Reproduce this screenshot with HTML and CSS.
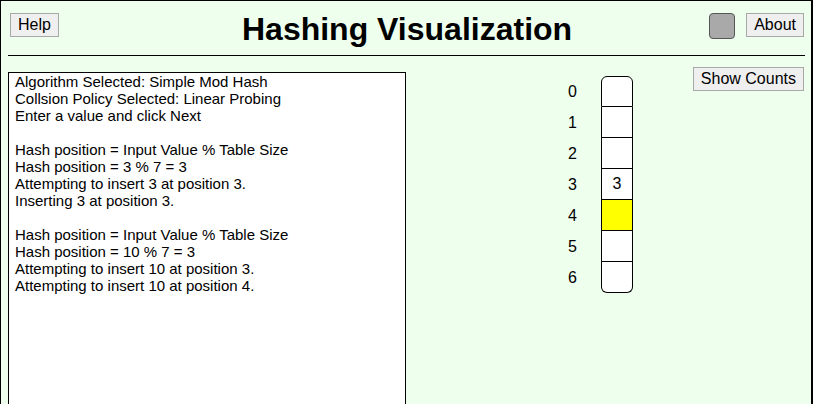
FILE: index.html
```html
<!DOCTYPE html>
<html>
<head>
<meta charset="utf-8">
<link rel="stylesheet" href="styles.css">
</head>
<body>
<div class="frame">
  <header class="top">
    <button class="btn help">Help</button>
    <h1 class="title">Hashing Visualization</h1>
    <div class="right-tools">
      <span class="swatch"></span>
      <button class="btn">About</button>
    </div>
  </header>
  <div class="rule"></div>
  <main class="main">
    <div class="log">
      <div class="lines">
        <div>Algorithm Selected: Simple Mod Hash</div>
        <div>Collsion Policy Selected: Linear Probing</div>
        <div>Enter a value and click Next</div>
        <div>&nbsp;</div>
        <div>Hash position = Input Value % Table Size</div>
        <div>Hash position = 3 % 7 = 3</div>
        <div>Attempting to insert 3 at position 3.</div>
        <div>Inserting 3 at position 3.</div>
        <div>&nbsp;</div>
        <div>Hash position = Input Value % Table Size</div>
        <div>Hash position = 10 % 7 = 3</div>
        <div>Attempting to insert 10 at position 3.</div>
        <div>Attempting to insert 10 at position 4.</div>
      </div>
    </div>
    <div class="table-area">
      <div class="hash">
        <div class="idx">0</div><div class="cell first"></div>
        <div class="idx">1</div><div class="cell"></div>
        <div class="idx">2</div><div class="cell"></div>
        <div class="idx">3</div><div class="cell">3</div>
        <div class="idx">4</div><div class="cell hl"></div>
        <div class="idx">5</div><div class="cell"></div>
        <div class="idx">6</div><div class="cell last"></div>
      </div>
    </div>
    <div class="side">
      <button class="btn counts">Show Counts</button>
    </div>
  </main>
</div>
</body>
</html>
```
FILE: styles.css
```css
* { box-sizing: border-box; }
html, body { margin: 0; padding: 0; }
body {
  font-family: "Liberation Sans", Arial, sans-serif;
  background: #eeffee;
  overflow: hidden;
}
.frame {
  width: 813px;
  height: 404px;
  overflow: hidden;
  border: 1px solid #000;
  border-right-width: 2px;
  border-bottom: none;
  background: #eeffee;
}
.top {
  display: flex;
  align-items: flex-start;
  justify-content: space-between;
  padding: 12px 7px 0 9px;
  height: 54px;
}
.btn {
  font-family: "Liberation Sans", Arial, sans-serif;
  font-size: 16px;
  color: #000;
  background: #efefef;
  border: 1px solid #a8a8a8;
  border-radius: 0;
  padding: 2px 7px;
  height: 24px;
  line-height: 18px;
}
.title {
  margin: 0;
  font-size: 32px;
  font-weight: bold;
  line-height: 32px;
  color: #000;
  padding-left: 46px;
}
.right-tools {
  display: flex;
  align-items: flex-start;
  gap: 11px;
}
.swatch {
  width: 26px;
  height: 26px;
  background: #a9a9a9;
  border: 1px solid #555;
  border-radius: 4px;
}
.rule {
  margin: 0 6px 0 7px;
  border-top: 1px solid #000;
}
.main {
  display: flex;
  align-items: flex-start;
  padding: 16px 7px 0 7px;
}
.log {
  width: 398px;
  height: 360px;
  flex: none;
  background: #fff;
  border: 1px solid #000;
  padding: 0 6px;
  font-size: 15px;
  line-height: 17px;
  color: #000;
}
.table-area {
  flex: 1;
  display: flex;
  justify-content: flex-end;
  padding-top: 4px;
  padding-right: 60px;
}
.hash {
  display: grid;
  grid-template-columns: 40px 32px;
  grid-auto-rows: 31px;
}
.idx {
  font-size: 16px;
  display: flex;
  align-items: center;
  justify-content: flex-end;
  padding-right: 24px;
  color: #000;
}
.cell {
  background: #fff;
  border: 1px solid #000;
  border-top: none;
  display: flex;
  align-items: center;
  justify-content: center;
  font-size: 16px;
}
.cell.first { border-top: 1px solid #000; border-radius: 6px 6px 0 0; }
.cell.last { border-radius: 0 0 6px 6px; }
.cell.hl { background: #ffff00; }
.side {
  display: flex;
  align-items: flex-start;
  margin-top: -5px;
}
```
